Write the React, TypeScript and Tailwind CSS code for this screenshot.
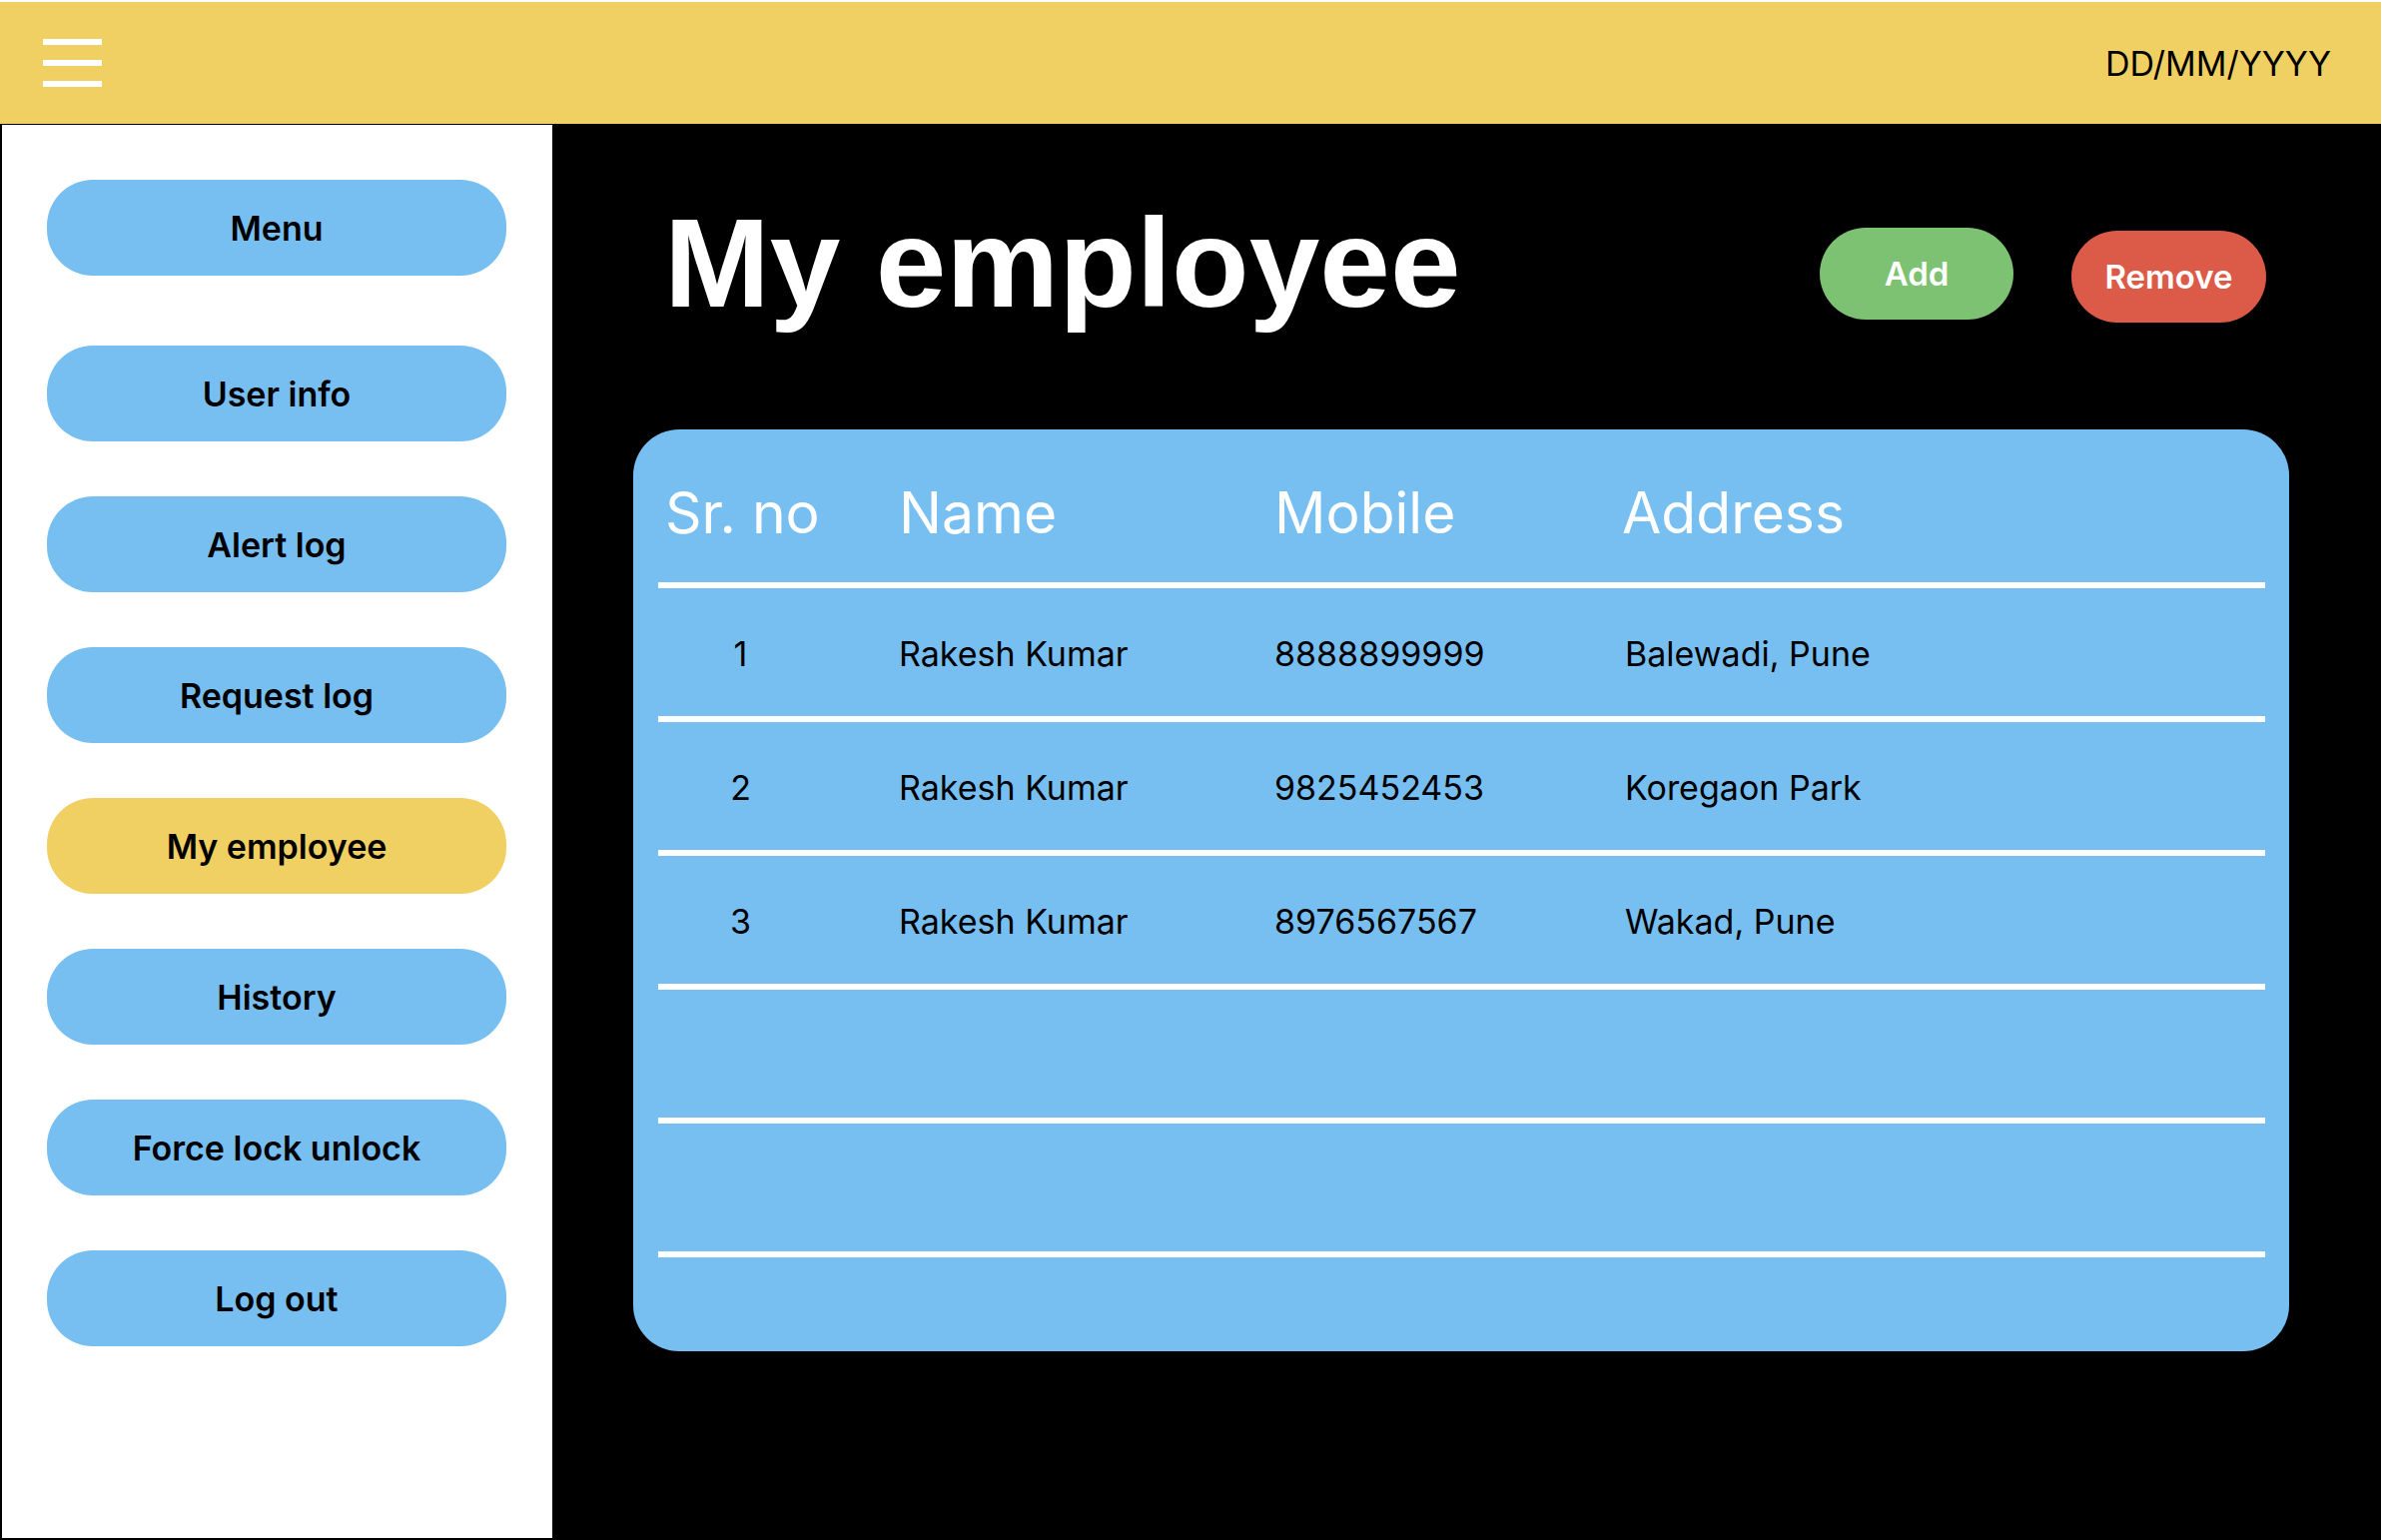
import type { ReactNode } from 'react';

interface Employee {
  id: number;
  name: string;
  mobile: string;
  address: string;
}

const employees: Employee[] = [
  { id: 1, name: 'Rakesh Kumar', mobile: '8888899999', address: 'Balewadi, Pune' },
  { id: 2, name: 'Rakesh Kumar', mobile: '9825452453', address: 'Koregaon Park' },
  { id: 3, name: 'Rakesh Kumar', mobile: '8976567567', address: 'Wakad, Pune' },
];

const navItems = [
  'Menu',
  'User info',
  'Alert log',
  'Request log',
  'My employee',
  'History',
  'Force lock unlock',
  'Log out',
];

const font = "font-['Inter','Noto_Sans',sans-serif]";

function Divider() {
  return <div className="h-[6px] bg-white" />;
}

function Row({ children }: { children?: ReactNode }) {
  return (
    <div className="grid h-[128px] grid-cols-[241px_376px_348px_1fr] items-center pt-[4px] text-[34px] leading-none text-black">
      {children}
    </div>
  );
}

export default function App() {
  return (
    <div className={`${font} flex h-[1542px] w-[2388px] flex-col bg-white pt-[2px] pr-[4px]`}>
      {/* HEADER */}
      <header className="flex h-[122px] items-center justify-between bg-[#F0D062] pl-[43px] pr-[50px]">
        <div className="flex flex-col gap-[15px]">
          <span className="block h-[6px] w-[59px] bg-white" />
          <span className="block h-[6px] w-[59px] bg-white" />
          <span className="block h-[6px] w-[59px] bg-white" />
        </div>
        <span className="pt-[2px] text-[34px] leading-none text-black">DD/MM/YYYY</span>
      </header>

      <div className="flex flex-1 bg-black">
        {/* SIDEBAR */}
        <aside className="flex w-[553px] flex-col gap-[55px] border-t border-b-2 border-l-2 border-black bg-white pt-[55px] pl-[45px]">
          {navItems.map((item, i) => (
            <button
              key={item}
              className={`flex h-[96px] w-[460px] items-center justify-center rounded-[46px] pt-[2px] text-[34px] font-semibold leading-none text-black ${
                item === 'My employee' ? 'bg-[#F0D062]' : 'bg-[#77BFF1]'
              } ${i === 1 ? 'mt-[15px]' : ''}`}
            >
              {item}
            </button>
          ))}
        </aside>

        {/* MAIN */}
        <main className="flex flex-1 flex-col pl-[81px] pr-[92px]">
          <div className="flex items-start pt-[76px] pl-[31px] pr-[23px]">
            <h1 className="flex-1 font-['Liberation_Sans',Arial,sans-serif] text-[127px] font-bold leading-none text-white">
              My employee
            </h1>
            <button className="mt-[28px] flex h-[92px] w-[194px] items-center justify-center rounded-[46px] bg-[#7DC272] text-[33px] font-semibold leading-none text-white">
              Add
            </button>
            <button className="mt-[31px] ml-[58px] flex h-[92px] w-[195px] items-center justify-center rounded-[46px] bg-[#DC5A48] text-[33px] font-semibold leading-none text-white">
              Remove
            </button>
          </div>

          <section className="mt-[103px] h-[923px] rounded-[46px] bg-[#77BFF1] pl-[25px] pr-[24px]">
            <div className="grid h-[153px] grid-cols-[241px_376px_348px_1fr] pt-[55px] text-[57px] leading-none text-white">
              <span className="pl-[7px]">Sr. no</span>
              <span>Name</span>
              <span>Mobile</span>
              <span>Address</span>
            </div>
            <Divider />
            {employees.map((e) => (
              <div key={e.id}>
                <Row>
                  <span className="ml-[9px] w-[147px] text-center">{e.id}</span>
                  <span>{e.name}</span>
                  <span>{e.mobile}</span>
                  <span className="pl-[3px]">{e.address}</span>
                </Row>
                <Divider />
              </div>
            ))}
            <Row />
            <Divider />
            <Row />
            <Divider />
          </section>
        </main>
      </div>
    </div>
  );
}
